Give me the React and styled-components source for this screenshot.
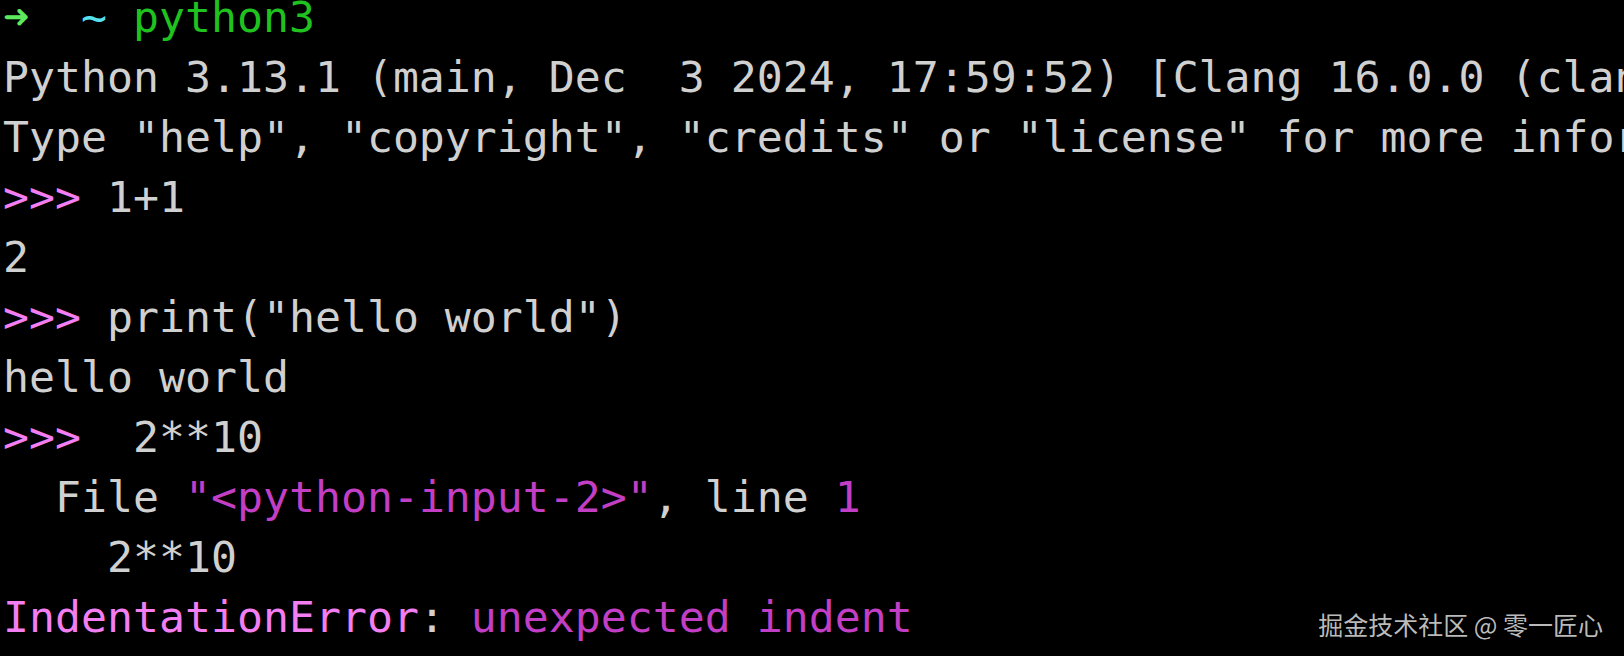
import React from 'react';
import styled, { createGlobalStyle } from 'styled-components';

const Global = createGlobalStyle`
  html, body {
    margin: 0;
    padding: 0;
    background: #000000;
  }
  #root {
    width: 1624px;
    height: 656px;
  }
`;

const tones = {
  text: '#d0d0d0',
  prompt: '#f27ef2',
  magenta: '#c23ec4',
  error: '#f27ef2',
  arrow: '#5fe85f',
  tilde: '#55e2f0',
  cmd: '#1fc21f',
};

const Screen = styled.div`
  position: relative;
  width: 1624px;
  height: 656px;
  background: #000000;
  overflow: hidden;
`;

const Output = styled.pre`
  margin: -13px 0 0 0;
  padding: 0 0 0 3px;
  font-family: "DejaVu Sans Mono", "Liberation Mono", monospace;
  font-size: 43.18px;
  line-height: 60px;
  color: ${tones.text};
  white-space: pre;
`;

const Line = styled.div`
  height: 60px;
`;

const Seg = styled.span`
  color: ${p => tones[p.$tone] || tones.text};
`;

const Cell = styled.span`
  display: inline-block;
  width: 26px;
  text-align: center;
  color: ${p => tones[p.$tone] || tones.text};
  font-weight: bold;
`;

const Watermark = styled.div`
  position: absolute;
  right: 21px;
  bottom: 16px;
  font-family: "Noto Sans CJK SC", "Noto Sans", sans-serif;
  font-size: 25px;
  line-height: 32px;
  color: rgba(222, 222, 222, 0.85);
  white-space: nowrap;
`;

export default function App() {
  return (
    <Screen>
      <Global />
      <Output>
        <Line>
          <Cell $tone="arrow">➜</Cell>{'  '}<Seg $tone="tilde">~</Seg> <Seg $tone="cmd">python3</Seg>
        </Line>
        <Line>Python 3.13.1 (main, Dec  3 2024, 17:59:52) [Clang 16.0.0 (clang-1600.0.26.4)] on darwin</Line>
        <Line>Type "help", "copyright", "credits" or "license" for more information.</Line>
        <Line><Seg $tone="prompt">&gt;&gt;&gt;</Seg> 1+1</Line>
        <Line>2</Line>
        <Line><Seg $tone="prompt">&gt;&gt;&gt;</Seg> print("hello world")</Line>
        <Line>hello world</Line>
        <Line><Seg $tone="prompt">&gt;&gt;&gt;</Seg>  2**10</Line>
        <Line>
          {'  File '}<Seg $tone="magenta">"&lt;python-input-2&gt;"</Seg>, line <Seg $tone="magenta">1</Seg>
        </Line>
        <Line>    2**10</Line>
        <Line>
          <Seg $tone="error">IndentationError</Seg>: <Seg $tone="magenta">unexpected indent</Seg>
        </Line>
      </Output>
      <Watermark>掘金技术社区 @ 零一匠心</Watermark>
    </Screen>
  );
}
